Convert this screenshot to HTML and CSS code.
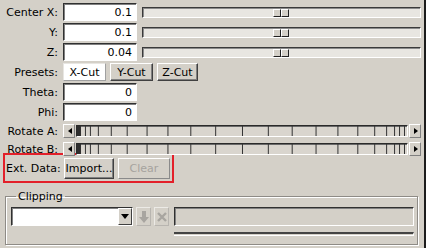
FILE: index.html
```html
<!DOCTYPE html>
<html lang="en">
<head>
  <meta charset="UTF-8" />
  <title>Cut Plane</title>
  <link rel="stylesheet" href="styles.css">
</head>
<body>
  <div class="panel">
    <div class="form">
      <label>Center X:</label>
      <div class="line">
        <input class="num" type="text" value="0.1">
        <div class="slider"><span class="handle"><i></i><i></i></span></div>
      </div>

      <label>Y:</label>
      <div class="line">
        <input class="num" type="text" value="0.1">
        <div class="slider"><span class="handle"><i></i><i></i></span></div>
      </div>

      <label>Z:</label>
      <div class="line">
        <input class="num" type="text" value="0.04">
        <div class="slider"><span class="handle"><i></i><i></i></span></div>
      </div>

      <label>Presets:</label>
      <div class="line presets">
        <button class="btn active">X-Cut</button>
        <button class="btn">Y-Cut</button>
        <button class="btn">Z-Cut</button>
      </div>

      <label>Theta:</label>
      <div class="line"><input class="num" type="text" value="0"></div>

      <label>Phi:</label>
      <div class="line"><input class="num" type="text" value="0"></div>

      <label>Rotate A:</label>
      <div class="line rot">
        <div class="scroll">
          <span class="arrow left"></span>
          <div class="trough">
            <svg class="ticks" viewBox="0 0 332 10" preserveAspectRatio="none">
              <rect x="0" y="0" width="4" height="10" fill="#2e2e2e"/>
              <g stroke="#333" stroke-width="1">
                <line x1="8.5" y1="0" x2="8.5" y2="10"/><line x1="13.5" y1="0" x2="13.5" y2="10"/>
                <line x1="21.5" y1="0" x2="21.5" y2="10"/><line x1="34.5" y1="0" x2="34.5" y2="10"/>
                <line x1="50.5" y1="0" x2="50.5" y2="10"/><line x1="70.5" y1="0" x2="70.5" y2="10"/>
                <line x1="91.5" y1="0" x2="91.5" y2="10"/><line x1="114.5" y1="0" x2="114.5" y2="10"/>
                <line x1="139.5" y1="0" x2="139.5" y2="10"/><line x1="166.5" y1="0" x2="166.5" y2="10"/>
                <line x1="192.5" y1="0" x2="192.5" y2="10"/><line x1="216.5" y1="0" x2="216.5" y2="10"/>
                <line x1="240.5" y1="0" x2="240.5" y2="10"/><line x1="262.5" y1="0" x2="262.5" y2="10"/>
                <line x1="282.5" y1="0" x2="282.5" y2="10"/><line x1="299.5" y1="0" x2="299.5" y2="10"/>
                <line x1="311.5" y1="0" x2="311.5" y2="10"/><line x1="319.5" y1="0" x2="319.5" y2="10"/>
                <line x1="324.5" y1="0" x2="324.5" y2="10"/><line x1="329.5" y1="0" x2="329.5" y2="10"/>
              </g>
            </svg>
          </div>
          <span class="arrow right"></span>
        </div>
      </div>

      <label>Rotate B:</label>
      <div class="line rot">
        <div class="scroll">
          <span class="arrow left"></span>
          <div class="trough">
            <svg class="ticks" viewBox="0 0 332 10" preserveAspectRatio="none">
              <rect x="0" y="0" width="4" height="10" fill="#2e2e2e"/>
              <g stroke="#333" stroke-width="1">
                <line x1="8.5" y1="0" x2="8.5" y2="10"/><line x1="13.5" y1="0" x2="13.5" y2="10"/>
                <line x1="21.5" y1="0" x2="21.5" y2="10"/><line x1="34.5" y1="0" x2="34.5" y2="10"/>
                <line x1="50.5" y1="0" x2="50.5" y2="10"/><line x1="70.5" y1="0" x2="70.5" y2="10"/>
                <line x1="91.5" y1="0" x2="91.5" y2="10"/><line x1="114.5" y1="0" x2="114.5" y2="10"/>
                <line x1="139.5" y1="0" x2="139.5" y2="10"/><line x1="166.5" y1="0" x2="166.5" y2="10"/>
                <line x1="192.5" y1="0" x2="192.5" y2="10"/><line x1="216.5" y1="0" x2="216.5" y2="10"/>
                <line x1="240.5" y1="0" x2="240.5" y2="10"/><line x1="262.5" y1="0" x2="262.5" y2="10"/>
                <line x1="282.5" y1="0" x2="282.5" y2="10"/><line x1="299.5" y1="0" x2="299.5" y2="10"/>
                <line x1="311.5" y1="0" x2="311.5" y2="10"/><line x1="319.5" y1="0" x2="319.5" y2="10"/>
                <line x1="324.5" y1="0" x2="324.5" y2="10"/><line x1="329.5" y1="0" x2="329.5" y2="10"/>
              </g>
            </svg>
          </div>
          <span class="arrow right"></span>
        </div>
      </div>
    </div>

    <!-- highlighted external data row -->
    <div class="ext">
      <label>Ext. Data:</label>
      <button class="btn">Import...</button>
      <button class="btn" disabled>Clear</button>
    </div>

    <fieldset class="clipping">
      <legend>Clipping</legend>
      <div class="clip-row">
        <div class="combo">
          <span class="combo-text"></span>
          <span class="combo-btn"></span>
        </div>
        <button class="icon-btn" disabled>
          <svg width="10" height="12" viewBox="0 0 10 12"><path d="M3 0h4v6h3l-5 6-5-6h3z" fill="#a8a5a0"/></svg>
        </button>
        <button class="icon-btn" disabled>
          <svg width="10" height="10" viewBox="0 0 10 10"><path d="M1 1l8 8M9 1l-8 8" stroke="#a8a5a0" stroke-width="2.4"/></svg>
        </button>
        <div class="clip-side">
          <div class="clip-field"></div>
          <div class="clip-bar"></div>
        </div>
      </div>
    </fieldset>
  </div>
</body>
</html>
```

FILE: styles.css
```css
* {
  box-sizing: border-box;
}

html, body {
  margin: 0;
  padding: 0;
  background: #d4d0c8;
  font-family: "DejaVu Sans", sans-serif;
  font-size: 11px;
  color: #000;
}

.panel {
  width: 426px;
  height: 248px;
  border-right: 2px solid #1c1c1c;
  padding-top: 3px;
  overflow: hidden;
}

.form {
  display: grid;
  grid-template-columns: 58px 1fr;
  column-gap: 5px;
  row-gap: 2px;
  align-items: center;
}

.form label {
  text-align: right;
  white-space: nowrap;
}

.line {
  display: flex;
  align-items: center;
  gap: 5px;
  padding-right: 3px;
}

/* sunken entry */
.num {
  width: 74px;
  height: 18px;
  padding: 0 4px 0 0;
  text-align: right;
  font: 11px "DejaVu Sans", sans-serif;
  background: #fff;
  border: 1px solid;
  border-color: #303030 #fff #fff #303030;
  box-shadow: inset 1px 1px 0 #808080;
  outline: none;
}

.slider {
  position: relative;
  flex: 1;
  height: 11px;
  background: #e8e6e1;
  border: 1px solid;
  border-color: #3a3a3a #fff #fff #3a3a3a;
  box-shadow: inset 1px 1px 0 #8a8a8a;
}

.handle {
  position: absolute;
  left: 130px;
  top: 1px;
  display: flex;
  height: 8px;
}

.handle i {
  width: 8px;
  height: 8px;
  background: #d4d0c8;
  border: 1px solid;
  border-color: #fff #202020 #202020 #fff;
}

.presets {
  gap: 4px;
}

.btn {
  height: 18px;
  padding: 0 4px;
  font: 11px "DejaVu Sans", sans-serif;
  color: #000;
  background: #d4d0c8;
  border: 1px solid;
  border-color: #fff #404040 #404040 #fff;
  box-shadow: inset -1px -1px 0 #808080;
}

.presets .btn {
  width: 43px;
  padding: 0;
}

.presets .btn:last-child {
  width: 41px;
}

.btn.active {
  background: #fff;
  border-color: #e8e6e2 #a0a0a0 #a0a0a0 #e8e6e2;
  box-shadow: none;
}

.btn:disabled {
  color: #a6a39e;
  border-color: #fff #8a8a8a #8a8a8a #fff;
  box-shadow: none;
}

.rot {
  height: 16px;
}

.scroll {
  flex: 1;
  display: flex;
  align-items: center;
  height: 14px;
}

.arrow {
  width: 12px;
  height: 14px;
  position: relative;
  background: #d4d0c8;
  border: 1px solid;
  border-color: #fff #808080 #808080 #fff;
}

.arrow::after {
  content: '';
  position: absolute;
  top: 3px;
  border: 3px solid transparent;
}

.arrow.left::after {
  left: 1px;
  border-right: 4px solid #000;
}

.arrow.right::after {
  left: 4px;
  border-left: 4px solid #000;
}

.trough {
  flex: 1;
  height: 12px;
  margin: 0 1px;
  background: #d9d5ce;
  border: 1px solid;
  border-color: #2a2a2a #fff #fff #2a2a2a;
  box-shadow: inset 1px 1px 0 #6a6a6a;
}

.ticks {
  display: block;
  width: 100%;
  height: 100%;
}

.ext {
  display: flex;
  align-items: center;
  gap: 4px;
  width: 171px;
  height: 30px;
  margin: -4px 0 0 3px;
  padding: 0 0 0 1px;
  border: 2px solid #e3202a;
}

.ext label {
  flex-shrink: 0;
  width: 53px;
  text-align: right;
  white-space: nowrap;
  margin-right: 1px;
}

.ext .btn {
  width: 50px;
  height: 21px;
  padding: 0;
  white-space: nowrap;
}

.ext .btn:disabled {
  width: 52px;
}

.clipping {
  margin: 7px 6px 0 5px;
  padding: 4px 3px 8px 5px;
  border: 1px solid #8e8b86;
  box-shadow: inset 1px 1px 0 #fff, 1px 1px 0 #fff;
}

.clipping legend {
  padding: 0 2px;
  margin-left: 5px;
}

.clip-row {
  display: flex;
  gap: 3px;
}

.combo {
  display: flex;
  width: 122px;
  height: 19px;
  background: #fff;
  border: 1px solid;
  border-color: #303030 #fff #fff #303030;
  box-shadow: inset 1px 1px 0 #808080;
}

.combo-text {
  flex: 1;
}

.combo-btn {
  position: relative;
  width: 14px;
  background: #d4d0c8;
  border: 1px solid;
  border-color: #fff #404040 #404040 #fff;
}

.combo-btn::after {
  content: '';
  position: absolute;
  left: 2px;
  top: 5px;
  border: 4px solid transparent;
  border-top: 5px solid #000;
}

.icon-btn {
  width: 15px;
  height: 19px;
  padding: 0;
  display: flex;
  align-items: center;
  justify-content: center;
  background: #d4d0c8;
  border: 1px solid;
  border-color: #eceae6 #b8b5b0 #b8b5b0 #eceae6;
}

.clip-side {
  flex: 1;
  display: flex;
  flex-direction: column;
  gap: 6px;
  margin-left: 2px;
}

.clip-field {
  height: 19px;
  border: 1px solid;
  border-color: #303030 #fff #fff #303030;
  box-shadow: inset 1px 1px 0 #808080;
}

.clip-bar {
  height: 4px;
  border-top: 2px solid #444;
  border-bottom: 1px solid #fff;
  border-right: 1px solid #fff;
}
```
